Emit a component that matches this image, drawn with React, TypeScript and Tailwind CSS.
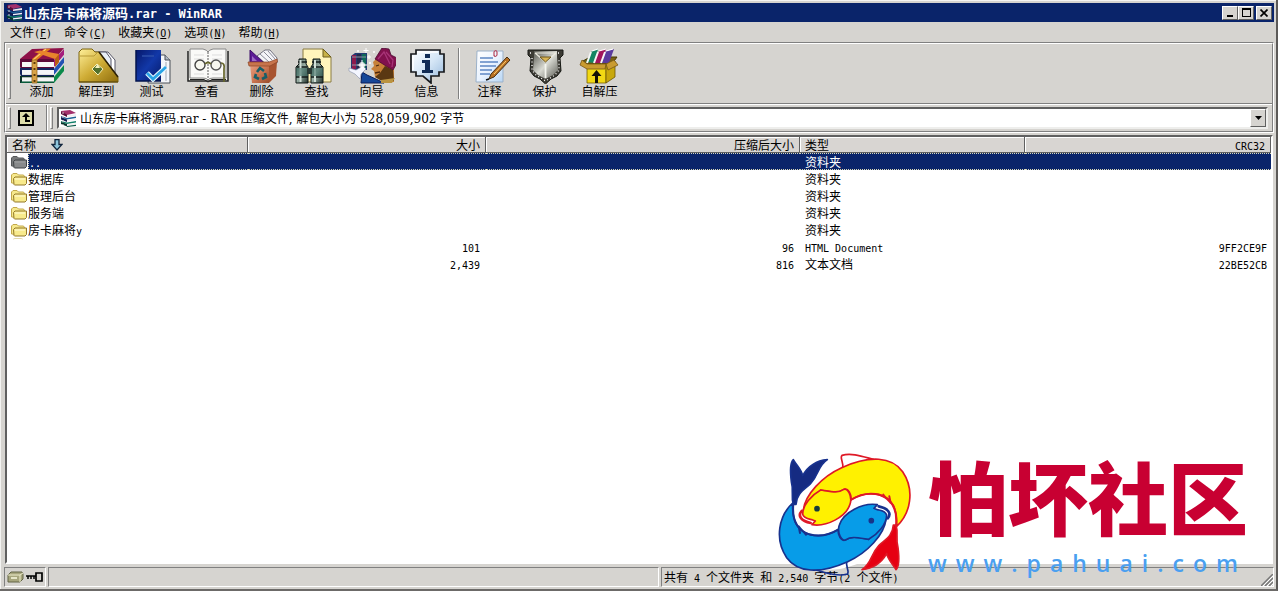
import React from "react";

/* Latin glyphs are set in a half-width mono face beside full-width CJK glyphs. */
function Mixed({ text, large }: { text: string; large?: boolean }) {
  const runs = text.match(/[\u0000-\u00ff]+|[^\u0000-\u00ff]+/g) || [];
  return (
    <>
      {runs.map((run, i) =>
        run.charCodeAt(0) < 256 ? (
          <span
            key={i}
            className={
              large
                ? "whitespace-pre font-['DejaVu_Sans_Mono',monospace] text-[12px] leading-none"
                : "whitespace-pre font-['DejaVu_Sans_Mono',monospace] text-[10px] leading-none"
            }
          >
            {run}
          </span>
        ) : (
          <React.Fragment key={i}>{run}</React.Fragment>
        ),
      )}
    </>
  );
}

function BooksSmall() {
  return (
    <svg width="17" height="17" viewBox="0 0 17 17" className="shrink-0" aria-hidden="true">
      <path d="M1 1 L10 0 L16 3 L7 5Z" fill="#a3306c" />
      <path d="M1 1 L7 4.500 V7 L1 4Z" fill="#5c0d38" />
      <path d="M7 5.500 L16 4 V6 L7 7Z" fill="#f3ecf0" />
      <path d="M1 6 L7 8 L16 6.500 V8 L7 9.500 L1 7Z" fill="#1d5f94" />
      <path d="M7 10 L16 8.800 V10.300 L7 11.300Z" fill="#f2f2f6" />
      <path d="M1 7 L7 9.500 V12 L1 9.500Z" fill="#101c50" />
      <path d="M1 11 L7 12.500 L16 11 V12.500 L7 14 L1 12Z" fill="#12806a" />
      <path d="M7 14.300 L16 13 V14.500 L7 15.600Z" fill="#f2f2f2" />
      <path d="M1 12 L7 14 V16.500 L1 14Z" fill="#06362c" />
      <path d="M7 16 L16 14.800 V16 L7 17Z" fill="#0b5a48" />
      <path d="M3 2 V15" stroke="#d7c8d0" strokeWidth="1" strokeDasharray="2 2" />
    </svg>
  );
}

const icons: Record<string, React.ReactNode> = {
  add: (
    <>
      <path d="M0 11 L12 1 L44 0 L34 12Z" fill="#8e1148" />
      <path d="M34 12 L44 1 V7 L34 19Z" fill="#a51d7c" />
      <path d="M34 19 L44 7 V9 L34 21Z" fill="#d8d8dc" />
      <path d="M34 21 L44 9 V15 L34 27Z" fill="#2352b4" />
      <path d="M34 27 L44 15 V17 L34 29Z" fill="#d8dcd8" />
      <path d="M34 29 L44 17 V23 L34 35Z" fill="#0b8a4a" />
      <path d="M0 11 H34 V14 H2 V19 H34 V21 H1 L0 19Z" fill="#5e0a3a" />
      <path d="M2 14 H34 V19 H2Z" fill="#f7f7f7" />
      <path d="M0 20 H34 V22 H2 V27 H34 V28 H1 L0 26Z" fill="#14245e" />
      <path d="M2 22 H34 V26.500 H2Z" fill="#f4f4f8" />
      <path d="M0 28 H34 V29.500 H2 V35 H0Z" fill="#0a3228" />
      <path d="M2 29.500 H34 V33.500 H2Z" fill="#f4f4f4" />
      <path d="M1 33.500 H34 V35 H1Z" fill="#075c3a" />
      <path d="M24 1 L31 .5 L17 12 V35 H12 V11Z" fill="#df7b1e" />
      <path d="M26 1 L13.500 11.500 V35" stroke="#f9c968" strokeWidth="1.200" fill="none" />
      <path d="M14 4 L20 2.500 L39 6 V14 L35 19 V11Z" fill="#e8842c" />
      <path d="M35 11 V19 L39 14 V6Z" fill="#b85c14" />
      <path d="M12 12 H17 V35 H12Z" fill="#d9a348" stroke="#8a5c14" strokeWidth=".7" />
      <path d="M14.500 14 V34" stroke="#5b3a08" strokeWidth="2" strokeDasharray="2 4" />
    </>
  ),
  extract: (
    <>
      <path d="M20 4 H33 L40 12 V28 H20Z" fill="#fff" stroke="#556" strokeWidth="1" />
      <path d="M23 4 L31 4 L36 11 V20" fill="#e8eef6" stroke="#556" strokeWidth="1" />
      <path d="M4 4 L7 1 H17 L20 4 H24 L43 29 V34 H4Z" fill="url(#goldGrad)" stroke="#7c6410" strokeWidth="1" />
      <path d="M5 8 L19 8 L23 4" stroke="#b89a36" fill="none" />
      <path d="M24 4 L43 29" stroke="#2c2004" strokeWidth="1.500" />
      <path d="M17 21 L22 16 L28 21 L23 27Z" fill="#51702c" stroke="#f7f0b8" strokeWidth="1" />
      <path d="M20 20 H25 L22.500 16Z" fill="#f8f2c0" />
      <path d="M4 34 H43" stroke="#5a4608" />
    </>
  ),
  test: (
    <>
      <path d="M22 7 H35 L40 12 V35 H18Z" fill="#f4f6fa" stroke="#4b5058" />
      <path d="M35 7 V12 H40" fill="#aeb6c2" stroke="#4b5058" />
      <path d="M36 14 V33" stroke="#a3a9b4" />
      <path d="M6 2 H31 V33 H6Z" fill="url(#navyGrad)" />
      <path d="M6 2 V33 H31" stroke="#03154e" fill="none" strokeWidth="1.500" />
      <path d="M12 8 H24" stroke="#2d4fa8" strokeWidth="1.500" />
      <path d="M17 25 L23 31 L36 19" stroke="#e8f8ff" strokeWidth="5" fill="none" />
      <path d="M17 25 L23 31 L36 19" stroke="#2aa4e6" strokeWidth="2.800" fill="none" />
    </>
  ),
  view: (
    <>
      <path d="M3 3 V33 H43 V3" fill="#f0f0ea" stroke="#222" strokeWidth="1.500" />
      <path d="M5 1 H18 Q22 2 23 4 Q24 2 28 1 H41 V30 H28 Q24 30 23 32 Q22 30 18 30 H5Z" fill="#fafaf8" stroke="#888" />
      <path d="M5 31.500 H19 L23 34 L27 31.500 H41" stroke="#222" fill="none" />
      <path d="M23 4 V33" stroke="#777" strokeWidth="1.200" strokeDasharray="2 1" />
      <path d="M9 7 H19 M9 11 H19 M27 7 H37 M27 11 H37 M9 26 H19 M27 26 H37" stroke="#ddd" />
      <circle cx="15" cy="17" r="5" fill="#f7f7ef" stroke="#444" strokeWidth="1.400" />
      <circle cx="31" cy="17" r="5" fill="#f7f7ef" stroke="#555" strokeWidth="1.400" />
      <path d="M20 16 Q23 13 26 16 M36 15 Q40 15 39 21 V34" stroke="#65652b" fill="none" strokeWidth="1.700" />
    </>
  ),
  remove: (
    <>
      <path d="M17 8 L25 2 L30 2 L37 10 V15 L26 16Z" fill="#f4f4f8" stroke="#556" strokeWidth=".8" />
      <path d="M20 6 L29 14 M24 4 L32 12 M28 3 L35 11" stroke="#8a8c98" />
      <path d="M10 2 L24 15 H10Z" fill="#5c1a96" stroke="#3d0c68" />
      <path d="M12 8 L17 13 H12Z" fill="#9c6cc4" />
      <path d="M10 16 H29 V35 H12Z" fill="url(#binGrad)" />
      <path d="M29 16 L37 13 L36 28 L29 35Z" fill="#a85430" />
      <path d="M8 14 H29 L37 11 L37.500 14 L30 18 H9Z" fill="#c8744c" stroke="#8a4526" strokeWidth=".7" />
      <path d="M17 24 L20 20 L24 23 M25 25 L26 29 L22 31 M19 31 L15 29 L16 26" stroke="#175e68" strokeWidth="2.600" fill="none" />
    </>
  ),
  find: (
    <>
      <path d="M8 1 H28 L36 9 V34 H8Z" fill="#fff5bc" stroke="#897b42" />
      <path d="M28 1 V9 H36Z" fill="#c7b148" stroke="#6c5d1d" />
      <path d="M4 11 H11 V16 L13 19 V35 H1 V19 L4 16Z" fill="url(#lensGrad)" stroke="#0c1715" />
      <path d="M18 11 H25 V16 L28 19 V35 H16 V19 L18 16Z" fill="url(#lensGrad)" stroke="#0c1715" />
      <path d="M3 14 H12 M17 14 H26 M1 29 H13 M16 29 H28 M2 19 H12 M17 19 H27" stroke="#101a18" strokeWidth="1.600" />
      <path d="M5.500 12 V34 M20 12 V34" stroke="#d2e0d8" strokeWidth="2" />
      <path d="M1 20 H13 V28 H1Z M16 20 H28 V28 H16Z" fill="#34665c" opacity=".55" />
      <path d="M12 20 H17 V26 H12Z" fill="#2a3a35" />
    </>
  ),
  wizard: (
    <>
      <path d="M1 8 L5 5 H17 V22 H1Z" fill="#223b72" />
      <path d="M2 7 H6 V21 H2Z" fill="#8c1a4c" />
      <path d="M7 6 H11 V21 H7Z" fill="#252a4c" />
      <path d="M12 6 H16 V21 H12Z" fill="#0f6958" />
      <path d="M2 9 H16 M2 17 H16" stroke="#8b96a3" />
      <path d="M28 9 L23 14 L24 18 L21 21 L24 23 L25 29 L34 34 H44 V22 L37 12Z" fill="#c78038" />
      <path d="M35 18 L43 22 L44 33 H32 L25 29 L30 25Z" fill="#5a3812" />
      <path d="M25 25 L30 24 M26 18 L29 17" stroke="#4a260c" strokeWidth="1.300" />
      <path d="M25 11 L32 0 L39 1 L41 7 L47 10 V15 L43 22 L36 18Z" fill="#81114d" stroke="#4d0a32" strokeWidth=".8" />
      <path d="M28 11 L34 4 L40 16 M36 4 L43 12 L42 19" stroke="#a83478" strokeWidth="1.300" fill="none" />
      <path d="M12 24 L17 27 L28 32 L34 35 H11Z" fill="#164798" stroke="#0a1d59" />
      <path d="M31 32 L45 30 L42 35 H31Z" fill="#ba9340" />
      <path d="M-1 20 L6 22 L13 18 L16 21 L11 26 L10 31 L5 26 L-1 23Z" fill="#f4f6ff" stroke="#8890aa" strokeWidth=".6" />
      <circle cx="12" cy="17" r="3" fill="#fff" opacity=".8" />
      <path d="M16 0 V5 M13.500 2.500 H18.500 M19 7 V11 M17 9 H21 M12 12 V21 M7.500 17 H17" stroke="#fff" />
      <path d="M7 3 H9 M23 4 H25 M19 15 H21" stroke="#fff" strokeWidth="1.500" />
    </>
  ),
  info: (
    <>
      <path d="M11 2 H35 V6 H39 V24 H34 V28 H26 V35 L18 28 H11 V24 H6 V6 H11Z" fill="url(#bubbleGrad)" stroke="#17191c" strokeWidth="1.700" />
      <path d="M12 4 H33 M8 8 V22" stroke="#fff" strokeWidth="1.500" />
      <path d="M20 6 H25 V10 H20Z M17 12 H25 V22 H28 V25 H17 V22 H20 V15 H17Z" fill="#102b55" />
    </>
  ),
  comment: (
    <>
      <path d="M9 3 H35 V34 H8Z" fill="url(#paperGrad)" stroke="#9bb1c9" />
      <path d="M12 10 H25 M12 14 H30 M12 18 H28 M12 22 H24 M12 26 H22" stroke="#5d87c4" strokeWidth="1.300" />
      <path d="M26 8 V4 Q28 1 29 4 V7 Q27 10 26 7" fill="none" stroke="#b7475e" strokeWidth="1.200" />
      <path d="M39 9 L42 12 L26 29 L21 31 L23 26Z" fill="#b87023" stroke="#463014" />
      <path d="M38 13 L26 26" stroke="#ffd06d" />
      <path d="M21 31 L18 32" stroke="#111" strokeWidth="1.500" />
    </>
  ),
  protect: (
    <>
      <path d="M5 2 H40 V7 L37 10 L38 23 L34 28 L28 31 L22.500 36 L17 31 L11 28 L7 23 L8 10 L5 7Z" fill="#3c3b34" stroke="#171914" strokeWidth="1" />
      <path d="M11 3 H34 V9 L35 22 L30 27 L22.500 31 L15 27 L10 22 L11 9Z" fill="url(#steelGrad)" />
      <path d="M12 5 H33 M12 5 L22.500 14 L33 5" stroke="#eceadf" strokeWidth="1.200" fill="none" />
      <path d="M17 9 H28 L22.500 14Z" fill="#d9b455" stroke="#6d5518" />
      <path d="M22.500 16 V30" stroke="#f4f5ee" strokeWidth="1.800" />
      <path d="M7 5 H10 M35 5 H38 M9 10 L9 22 L13 27 L22.500 33 L32 27 L36 22 L36 10" stroke="#fff" strokeWidth="1.300" strokeDasharray="1 2.500" fill="none" />
    </>
  ),
  sfx: (
    <>
      <path d="M5 13 L12 9 H35 L39 9 L34 16 H9Z" fill="#776112" stroke="#443705" />
      <path d="M8 14 L14 3 L20 1 L17 15Z" fill="#138663" />
      <path d="M16 15 L21 3 L28 1 L24 15Z" fill="#a1165c" />
      <path d="M23 15 L28 3 L36 1 L31 15Z" fill="#5a3a9e" />
      <path d="M13 4 L9 15 M20 4 L16 15 M27 4 L23 15" stroke="#f6f6f6" strokeWidth="2" />
      <path d="M14 3 L20 1 M21 3 L28 1 M28 3 L35 1" stroke="#fff" strokeWidth="1.300" />
      <path d="M9 17 H28 V35 H9Z" fill="#f2d914" stroke="#735e05" strokeWidth=".8" />
      <path d="M28 17 L37 13 V29 L28 35Z" fill="#c8a80c" stroke="#6c5705" strokeWidth=".8" />
      <path d="M9 16 L4 12 L2 17 L9 21 H27 L28 16Z M28 16 L36 12 L40 17 L30 22Z" fill="#c99b30" stroke="#765616" strokeWidth=".8" />
      <path d="M17 35 V28 H13.500 L18.500 22 L23.500 28 H20 V35Z" fill="#141105" />
    </>
  ),
};

const tools = [
  { id: "add", label: "添加" },
  { id: "extract", label: "解压到" },
  { id: "test", label: "测试" },
  { id: "view", label: "查看" },
  { id: "remove", label: "删除" },
  { id: "find", label: "查找" },
  { id: "wizard", label: "向导" },
  { id: "info", label: "信息" },
];
const extraTools = [
  { id: "comment", label: "注释" },
  { id: "protect", label: "保护" },
  { id: "sfx", label: "自解压" },
];

function Gradients() {
  const list: [string, string, string, string][] = [
    ["goldGrad", "#fff09a", "#cfac35", "#8d6c0c"],
    ["navyGrad", "#06186a", "#1238a8", "#061a69"],
    ["binGrad", "#e9a184", "#ce7854", "#9a4c2c"],
    ["lensGrad", "#42554f", "#9cb1a7", "#1f2d29"],
    ["bubbleGrad", "#ffffff", "#d5e6f6", "#94b7db"],
    ["paperGrad", "#ffffff", "#eaf3ff", "#b8d6f4"],
    ["steelGrad", "#55564f", "#d9dad2", "#5b5c55"],
  ];
  return (
    <svg width="0" height="0" className="absolute" aria-hidden="true">
      <defs>
        {list.map(([id, a, b, c]) => (
          <linearGradient key={id} id={id} x1="0" y1="0" x2="1" y2="1">
            <stop offset="0" stopColor={a} />
            <stop offset=".5" stopColor={b} />
            <stop offset="1" stopColor={c} />
          </linearGradient>
        ))}
      </defs>
    </svg>
  );
}

function Tool({ id, label }: { id: string; label: string }) {
  return (
    <button className="flex w-[55px] flex-col items-center pt-1">
      <svg width="48" height="36" viewBox="-2 0 48 36" aria-hidden="true">
        {icons[id]}
      </svg>
      <span className="leading-[14px]">{label}</span>
    </button>
  );
}

function Grip() {
  return <span className="w-[3px] shrink-0 self-stretch border border-[#808080] border-l-white border-t-white" />;
}

function Folder({ dim }: { dim?: boolean }) {
  return (
    <svg width="16" height="14" viewBox="0 0 16 14" className="shrink-0" aria-hidden="true">
      <path d="M.5 11 V3 L2 1.500 H6 L7.500 3 H12.500 L13.500 4.500 V12Z" fill={dim ? "#77797a" : "#f6e98c"} stroke={dim ? "#55585a" : "#c2a84c"} />
      <path d="M3 12.500 L2.500 6.500 L4 5 H15.500 V11.500 L14 13 H3.500Z" fill={dim ? "#888a8b" : "#f8ea8c"} stroke={dim ? "#414547" : "#93792a"} />
      <path d="M4 7 H14" stroke={dim ? "#a0a2a3" : "#fffbd8"} />
    </svg>
  );
}

const menus: [string, string][] = [
  ["文件", "F"],
  ["命令", "C"],
  ["收藏夹", "O"],
  ["选项", "N"],
  ["帮助", "H"],
];

const rows = [
  { name: "..", type: "资料夹", folder: true, selected: true },
  { name: "数据库", type: "资料夹", folder: true },
  { name: "管理后台", type: "资料夹", folder: true },
  { name: "服务端", type: "资料夹", folder: true },
  { name: "房卡麻将y", type: "资料夹", folder: true },
  { name: "", size: "101", packed: "96", type: "HTML Document", crc: "9FF2CE9F" },
  { name: "", size: "2,439", packed: "816", type: "文本文档", crc: "22BE52CB" },
] as { name: string; size?: string; packed?: string; type: string; crc?: string; folder?: boolean; selected?: boolean }[];

const raised = "border border-b-[#606060] border-l-white border-r-[#606060] border-t-white bg-[#d6d4d0]";
const sunken = "border border-b-white border-l-[#808080] border-r-white border-t-[#808080]";
const headCell = "h-4 border-b border-r border-[#606060] px-[5px] py-0 font-normal shadow-[inset_1px_1px_0_#ffffff]";

function Cell({ text, className }: { text: string; className: string }) {
  return (
    <td className={className}>
      <div className="h-[15px] whitespace-nowrap leading-[15px]">
        <Mixed text={text} />
      </div>
    </td>
  );
}

function FishLogo() {
  const body =
    "M100 195 C105 150 155 95 215 68 C300 30 365 35 398 80 C435 135 422 205 380 244 C382 195 370 160 325 148 C295 143 265 150 244 164 C244 148 235 128 222 133 C205 145 190 143 152 135";
  const head =
    "M152 135 C125 150 98 180 98 208 C102 222 118 222 126 224 L136 228 L126 239 C170 246 228 216 240 178 C248 155 232 125 220 134 C205 145 185 140 152 135Z";
  const tail = "M378 240 C386 265 376 280 384 308 C388 340 388 365 378 374 C367 355 354 345 350 326 C334 354 308 371 276 374 C306 354 300 330 327 301 C348 282 368 272 370 240Z";
  const fin = "M218 70 C222 52 208 38 216 31 C244 22 280 35 310 43";
  const back = "M95 198 C82 213 94 228 122 234";
  const belly = "M244 164 C270 148 300 142 330 150 C365 162 383 190 378 242 M340 149 C345 158 354 162 362 174 L358 154";
  return (
    <svg width="150" height="140" viewBox="0 0 450 420" className="shrink-0" aria-hidden="true">
      <g strokeLinecap="round" strokeLinejoin="round">
        <path d="M75 205 C90 150 150 90 225 65 C320 30 395 55 412 115 L385 245 C375 315 285 355 210 372 C110 388 30 325 40 240Z" fill="#fff" />
        <g stroke="#df1926" strokeWidth="5" fill="none">
          <path d={fin} fill="#fff" />
          <path d={body} fill="#fff100" />
          <path d={head} fill="#fff100" />
          <path d={tail} fill="#e60012" />
          <path d={back} strokeWidth="8" />
          <path d={belly} strokeWidth="6" />
          <circle cx="141" cy="191" r="6" fill="#173b3b" stroke="#173b3b" />
        </g>
        <g transform="rotate(180 224 209)" stroke="#18328e" strokeWidth="5" fill="none">
          <path d={fin} />
          <path d={body} fill="#079ce8" />
          <path d={head} fill="#079ce8" />
          <path d={tail} fill="#152b82" />
          <path d={back} strokeWidth="8" />
          <path d={belly} strokeWidth="6" />
          <circle cx="144" cy="191" r="6" fill="#173b7b" />
        </g>
      </g>
    </svg>
  );
}

export default function App() {
  return (
    <div className="relative flex min-h-screen flex-col overflow-hidden border-b-2 border-r-2 border-b-[#6c6a68] border-r-[#5c5a58] bg-[#d6d4d0] pb-0.5 pl-1 pr-0.5 pt-[3px] font-['Noto_Sans_CJK_SC',sans-serif] text-[12px] leading-4 text-black shadow-[inset_1px_1px_0_#f4f4f2]">
      <Gradients />
      <header className="flex h-[19px] items-center bg-[#0a246a] pl-0.5 pr-0.5 text-white">
        <BooksSmall />
        <h1 className="ml-px flex-1 text-[13px] font-bold">
          <Mixed text="山东房卡麻将源码.rar - WinRAR" large />
        </h1>
        <div className="flex text-black">
          <button aria-label="最小化" className={`flex h-[14px] w-4 items-end justify-center pb-0.5 ${raised}`}>
            <span className="h-0.5 w-1.5 bg-black" />
          </button>
          <button aria-label="最大化" className={`flex h-[14px] w-4 items-center justify-center ${raised}`}>
            <span className="h-[9px] w-[9px] border border-t-2 border-black" />
          </button>
          <button aria-label="关闭" className={`ml-0.5 flex h-[14px] w-4 items-center justify-center ${raised}`}>
            <svg width="8" height="8" viewBox="0 0 8 8" aria-hidden="true">
              <path d="M.5 .5 L7.500 7.500 M7.500 .5 L.5 7.500" stroke="#000" strokeWidth="1.700" />
            </svg>
          </button>
        </div>
      </header>

      <nav className="flex h-5 items-center gap-3 pl-1.5">
        {menus.map(([name, key]) => (
          <button key={key} className="whitespace-nowrap">
            {name}
            <span className="font-['DejaVu_Sans_Mono',monospace] text-[10px] leading-none">
              (<u>{key}</u>)
            </span>
          </button>
        ))}
      </nav>

      <div className="border border-b-white border-l-[#808080] border-r-white border-t-[#808080]">
        <div className="border border-b-[#808080] border-l-white border-r-[#808080] border-t-white">
          <div className="flex h-[60px] items-stretch border-b border-[#808080] pl-0.5">
            <div className="flex py-1">
              <Grip />
            </div>
            <div className="ml-[3px] flex">
              {tools.map((t) => (
                <Tool key={t.id} {...t} />
              ))}
            </div>
            <span className="my-1 ml-1 mr-0.5 w-0.5 border-l border-r border-l-[#808080] border-r-white" />
            <div className="flex">
              {extraTools.map((t) => (
                <Tool key={t.id} {...t} />
              ))}
            </div>
          </div>
          <div className="flex h-[27px] items-center border-t border-white pl-0.5 pr-1">
            <div className="flex h-[22px]">
              <Grip />
            </div>
            <button aria-label="上一级" className="ml-[7px] shrink-0">
              <svg width="16" height="16" viewBox="0 0 16 16" aria-hidden="true">
                <rect x="1" y="1" width="14" height="14" fill="#dedeaa" stroke="#000" strokeWidth="2" />
                <path d="M8 3 L12 7 H9 V10 H12 V12 H7 V7 H4Z" fill="#000" />
              </svg>
            </button>
            <span className="ml-3 h-[26px] w-0.5 border-l border-r border-l-[#808080] border-r-white" />
            <div className="ml-0.5 mr-1 flex h-[22px]">
              <Grip />
            </div>
            <div className="flex h-[22px] min-w-0 flex-1 items-center border-2 border-b-[#eeeeec] border-l-[#606060] border-r-[#eeeeec] border-t-[#606060] bg-white pl-px">
              <BooksSmall />
              <div className="relative ml-[3px] flex min-w-0 flex-1 items-center">
                <select
                  aria-label="路径"
                  className="h-[18px] w-full appearance-none bg-transparent pt-0.5 font-['DejaVu_Serif','Noto_Sans_CJK_SC',serif] text-[12px] leading-4 outline-none"
                >
                  <option>山东房卡麻将源码.rar - RAR 压缩文件, 解包大小为 528,059,902 字节</option>
                </select>
                <span className={`pointer-events-none absolute right-0 flex h-[18px] w-4 items-center justify-center ${raised}`}>
                  <svg width="7" height="4" viewBox="0 0 7 4" aria-hidden="true">
                    <path d="M0 0 H7 L3.500 4Z" fill="#000" />
                  </svg>
                </span>
              </div>
            </div>
          </div>
        </div>
      </div>

      <main className="ml-px mr-px mt-0.5 flex-1 border-2 border-b-white border-l-[#606060] border-r-white border-t-[#606060] bg-white">
        <table className="w-full table-fixed border-separate border-spacing-0">
          <colgroup>
            <col className="w-[241px]" />
            <col className="w-[238px]" />
            <col className="w-[314px]" />
            <col className="w-[225px]" />
            <col />
          </colgroup>
          <thead>
            <tr className="bg-[#d8d5d2] leading-[15px]">
              <th className={`text-left ${headCell}`}>
                <span className="flex h-[15px] items-center gap-[15px]">
                  名称
                  <svg width="12" height="12" viewBox="0 0 12 12" aria-hidden="true">
                    <path d="M4 .7 H8 V5.500 H11 L6 11 L1 5.500 H4Z" fill="#8fc6dc" stroke="#10243c" strokeWidth="1.300" />
                  </svg>
                </span>
              </th>
              <th className={`text-right ${headCell}`}>大小</th>
              <th className={`text-right ${headCell}`}>压缩后大小</th>
              <th className={`text-left ${headCell}`}>类型</th>
              <th className={`text-right ${headCell}`}>
                <div className="h-[15px]">
                  <Mixed text="CRC32" />
                </div>
              </th>
            </tr>
          </thead>
          <tbody>
            {rows.map((r, i) => {
              const cell = r.selected
                ? "border-y border-dotted border-[#d8d8b8] bg-[#0a246a] py-0 text-white"
                : "border-y border-transparent py-0";
              return (
                <tr key={i}>
                  <td className="h-[17px] p-0 pl-1">
                    <div className="flex h-[17px] items-center">
                      {r.folder && <Folder dim={r.selected} />}
                      {i === 5 && <span className="ml-0.5 h-0.5 w-2.5 self-start rounded-t-sm border-t border-[#e4d9aa]" />}
                      {r.name && (
                        <span
                          className={
                            r.selected
                              ? "ml-px h-[17px] flex-1 border border-r-0 border-dotted border-[#d8d8b8] bg-[#0a246a] leading-[15px] text-white"
                              : "ml-px h-[17px] leading-[17px]"
                          }
                        >
                          <Mixed text={r.name} />
                        </span>
                      )}
                    </div>
                  </td>
                  <Cell text={r.size || ""} className={`${cell} pl-0 pr-1.5 text-right`} />
                  <Cell text={r.packed || ""} className={`${cell} pl-0 pr-1.5 text-right`} />
                  <Cell text={r.type} className={`${cell} pl-[5px] pr-0`} />
                  <Cell text={r.crc || ""} className={`${cell} pl-0 pr-1 text-right`} />
                </tr>
              );
            })}
          </tbody>
        </table>
      </main>

      <footer className="mt-[3px] flex h-5 gap-0.5">
        <div className={`flex w-[42px] items-center gap-0.5 pl-0.5 ${sunken}`}>
          <svg width="17" height="12" viewBox="0 0 17 12" aria-hidden="true">
            <path d="M1 4 L4 1 H15 L16 3 V8 L13 11 H1Z" fill="#a7a67d" stroke="#626446" />
            <path d="M1 4 H13 L16 2 M13 4 V11" stroke="#eeedcc" fill="none" />
            <path d="M4 7 H10" stroke="#fafae2" strokeWidth="1.500" />
          </svg>
          <svg width="17" height="10" viewBox="0 0 17 10" aria-hidden="true">
            <path d="M0 4 H10 M2 4 V7 M5 4 V7 M8 4 V7" stroke="#000" strokeWidth="1.500" />
            <path d="M10 1 H16 V9 H10Z" fill="#d6d4d0" stroke="#000" strokeWidth="1.700" />
          </svg>
        </div>
        <div className={`flex-1 ${sunken}`} />
        <div className={`relative flex-1 whitespace-nowrap pl-0.5 leading-[18px] ${sunken}`}>
          <Mixed text="共有 4 个文件夹 和 2,540 字节(2 个文件)" />
          <svg width="12" height="12" viewBox="0 0 12 12" className="absolute bottom-0 right-0" aria-hidden="true">
            <path d="M0 12 L12 0 M4 12 L12 4 M8 12 L12 8" stroke="#777" strokeWidth="1.500" />
            <path d="M2 12 L12 2 M6 12 L12 6 M10 12 L12 10" stroke="#fff" />
          </svg>
        </div>
      </footer>

      <div className="pointer-events-none absolute bottom-1 right-[25px] flex h-[140px] items-start">
        <FishLogo />
        <div className="ml-2 flex w-[323px] flex-col">
          <span className="whitespace-nowrap text-[80px] font-black leading-[98px] text-[#c80032]">怕坏社区</span>
          <span className="mt-1.5 whitespace-nowrap font-['Open_Sans',sans-serif] text-[23px] font-semibold leading-7 tracking-[9px] text-[#4a9ff0]">
            www.pahuai.com
          </span>
        </div>
      </div>
    </div>
  );
}
